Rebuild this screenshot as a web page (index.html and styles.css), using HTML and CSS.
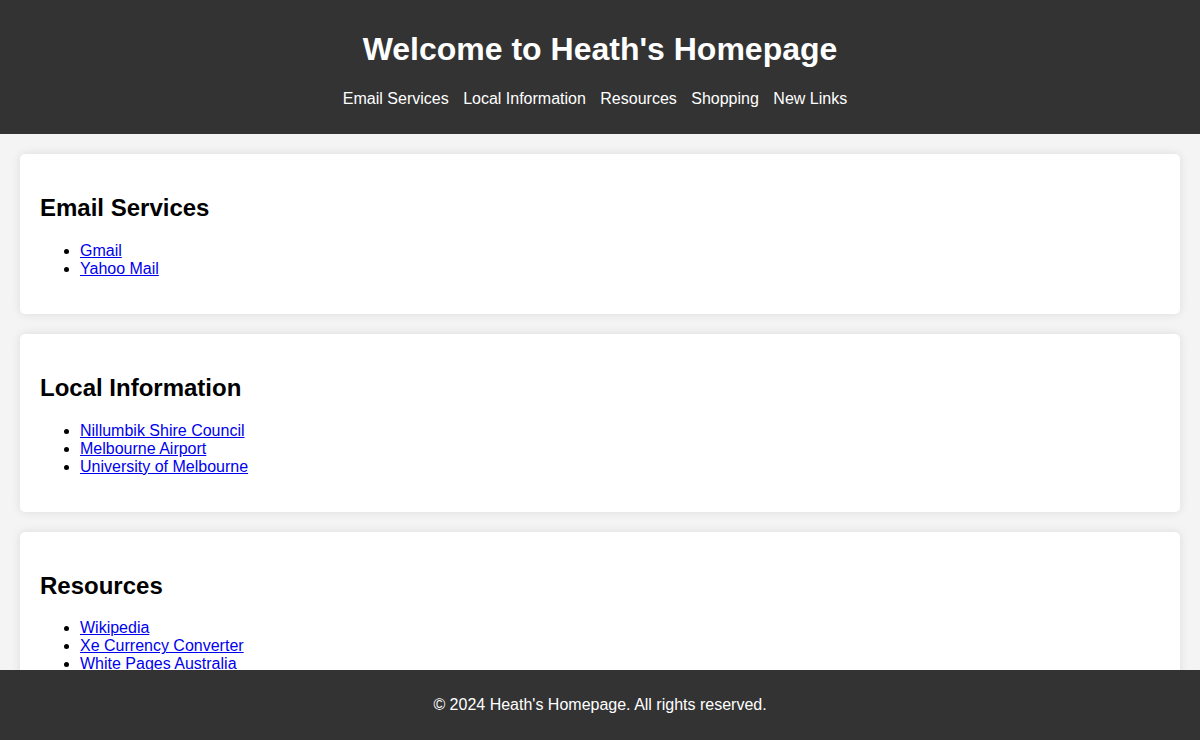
FILE: index.html
```html
<!DOCTYPE html>
<html lang="en">
<head>
    <meta charset="UTF-8">
    <meta name="viewport" content="width=device-width, initial-scale=1.0">
    <title>Heath's Homepage</title>
    <link rel="stylesheet" href="styles.css">
</head>
<body>
    <header>
        <h1>Welcome to Heath's Homepage</h1>
        <nav>
            <ul>
                <li><a href="#email">Email Services</a></li>
                <li><a href="#local">Local Information</a></li>
                <li><a href="#resources">Resources</a></li>
                <li><a href="#shopping">Shopping</a></li>
                <li><a href="#new">New Links</a></li>
            </ul>
        </nav>
    </header>

    <main>
        <!-- Email -->
        <section id="email">
            <h2>Email Services</h2>
            <ul>
                <li><a href="#">Gmail</a></li>
                <li><a href="#">Yahoo Mail</a></li>
            </ul>
        </section>

        <!-- Local -->
        <section id="local">
            <h2>Local Information</h2>
            <ul>
                <li><a href="#">Nillumbik Shire Council</a></li>
                <li><a href="#">Melbourne Airport</a></li>
                <li><a href="#">University of Melbourne</a></li>
            </ul>
        </section>

        <!-- Resources -->
        <section id="resources">
            <h2>Resources</h2>
            <ul>
                <li><a href="#">Wikipedia</a></li>
                <li><a href="#">Xe Currency Converter</a></li>
                <li><a href="#">White Pages Australia</a></li>
            </ul>
        </section>
    </main>

    <footer>
        <p>&copy; 2024 Heath's Homepage. All rights reserved.</p>
    </footer>
</body>
</html>
```

FILE: styles.css
```css
body {
    font-family: "Liberation Sans", Arial, sans-serif;
    margin: 0;
    padding: 0;
    background: #f4f4f4;
}
header {
    background: #333;
    color: white;
    text-align: center;
    padding: 10px 0;
}
header h1 {
    font-size: 32px;
    margin: 21px 0 22px;
}
nav ul {
    list-style: none;
    padding: 0;
    margin: 16px 0;
}
nav li {
    display: inline;
    margin-right: 10px;
}
nav a {
    color: white;
    text-decoration: none;
}
main {
    padding: 20px;
    padding-bottom: 70px;
}
section {
    background: white;
    padding: 20px;
    margin-bottom: 20px;
    border-radius: 5px;
    box-shadow: 0 0 10px rgba(0, 0, 0, 0.1);
}
section h2 {
    font-size: 24px;
}
section a {
    color: #0000ee;
}
footer {
    position: fixed;
    bottom: 0;
    left: 0;
    width: 100%;
    background: #333;
    color: white;
    text-align: center;
    padding: 10px 0;
}
```
